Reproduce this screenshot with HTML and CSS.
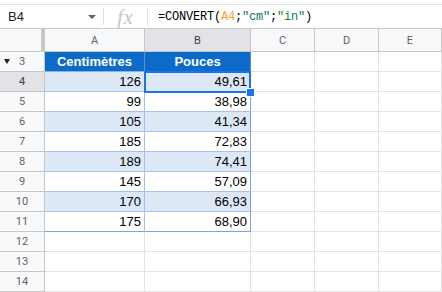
FILE: index.html
```html
<!DOCTYPE html>
<html>
<head>
    <title>CONVERT</title>
    <link rel="stylesheet" href="styles.css">
</head>
<body>
    <div class="formula-bar">
        <div class="name-box">
            <span class="cell-ref">B4</span>
            <span class="caret"></span>
        </div>
        <div class="sep"></div>
        <div class="fx">fx</div>
        <div class="sep"></div>
        <div class="formula">=CONVERT(<span class="ref">A4</span>;<span class="str">"cm"</span>;<span class="str">"in"</span>)</div>
    </div>

    <div class="sheet">
        <div class="grid top">
            <div class="corner"></div>
            <div class="col-head">A</div>
            <div class="col-head active">B</div>
            <div class="col-head">C</div>
            <div class="col-head">D</div>
            <div class="col-head">E</div>

            <div class="row-head"><span class="tri"></span>3</div>
            <div class="cell head">Centimètres</div>
            <div class="cell head">Pouces</div>
            <div class="cell"></div>
            <div class="cell"></div>
            <div class="cell"></div>
        </div>
        <div class="grid" id="rows"></div>
        <div class="selection"><span class="handle"></span></div>
    </div>

    <script>
        const data = [
            [126, '49,61'],
            [99, '38,98'],
            [105, '41,34'],
            [185, '72,83'],
            [189, '74,41'],
            [145, '57,09'],
            [170, '66,93'],
            [175, '68,90'],
        ];

        const rows = document.getElementById('rows');
        let html = '';

        for (let r = 4; r <= 14; r++) {
            const item = data[r - 4];
            html += `<div class="row-head${r === 4 ? ' active' : ''}">${r}</div>`;
            if (item) {
                const band = r % 2 === 0 ? ' band' : '';
                const last = r === 11 ? ' last' : '';
                html += `<div class="cell num${band}${last}">${item[0]}</div>`;
                html += `<div class="cell num edge${band}${last}">${item[1]}</div>`;
            } else {
                html += '<div class="cell"></div><div class="cell"></div>';
            }
            html += '<div class="cell"></div><div class="cell"></div><div class="cell"></div>';
        }

        rows.innerHTML = html;
    </script>
</body>
</html>
```

FILE: styles.css
```css
body {
    margin: 0;
    font-family: 'Liberation Sans', Arial, sans-serif;
    background: white;
    overflow: hidden;
}

.formula-bar {
    margin-top: 4px;
    height: 23px;
    border-top: 1px solid #e3e3e3;
    border-bottom: 1px solid #c7c7c7;
    display: flex;
    align-items: center;
}

.name-box {
    width: 103px;
    box-sizing: border-box;
    padding: 0 6px 0 8px;
    display: flex;
    align-items: center;
    justify-content: space-between;
    font-size: 13px;
    color: #202124;
}

.caret {
    width: 0;
    height: 0;
    border-left: 4px solid transparent;
    border-right: 4px solid transparent;
    border-top: 4px solid #5f6368;
    margin-right: 1px;
}

.sep {
    width: 1px;
    height: 17px;
    background: #e0e0e0;
}

.fx {
    width: 43px;
    text-align: center;
    font-family: 'Liberation Serif', serif;
    font-style: italic;
    font-size: 20px;
    color: #c4c7c5;
    line-height: 20px;
    letter-spacing: 1px;
}

.formula {
    padding-left: 10px;
    font-family: 'Liberation Mono', monospace;
    font-size: 12px;
    letter-spacing: -0.2px;
    color: #000;
}

.formula .ref {
    color: #f4a13f;
}

.formula .str {
    color: #0b8043;
}

.sheet {
    position: relative;
}

.grid {
    display: grid;
    grid-template-columns: 45px 100px 106px 64px 64px 1fr;
    grid-auto-rows: 20px;
}

.grid.top {
    grid-template-rows: 23px 20px;
}

.grid > div {
    box-sizing: border-box;
}

.corner {
    background: #f8f9fa;
    border-right: 4px solid #c4c7c5;
    border-bottom: 1px solid #c4c7c5;
}

.col-head {
    background: #f8f9fa;
    border-right: 1px solid #c4c7c5;
    border-bottom: 1px solid #c4c7c5;
    font-family: Roboto, sans-serif;
    font-size: 11px;
    color: #5f6368;
    display: flex;
    align-items: center;
    justify-content: center;
}

.col-head.active,
.row-head.active {
    background: #e1e3e6;
    color: #3c4043;
}

.row-head {
    position: relative;
    background: #f8f9fa;
    border-right: 1px solid #c4c7c5;
    border-bottom: 1px solid #c4c7c5;
    font-family: Roboto, sans-serif;
    font-size: 11px;
    color: #5f6368;
    display: flex;
    align-items: center;
    justify-content: center;
}

.tri {
    position: absolute;
    left: 4px;
    top: 7px;
    width: 0;
    height: 0;
    border-left: 3.5px solid transparent;
    border-right: 3.5px solid transparent;
    border-top: 5px solid #202124;
}

.cell {
    border-right: 1px solid #e2e3e3;
    border-bottom: 1px solid #e2e3e3;
    font-size: 13px;
    color: #000;
    display: flex;
    align-items: center;
    padding: 0 3px;
    white-space: nowrap;
}

.cell.head {
    background: #0c6bc8;
    color: white;
    font-weight: bold;
    justify-content: center;
    border-right-color: #5b8fd6;
    border-bottom-color: #8fb1e6;
}

.cell.num {
    justify-content: flex-end;
    border-right-color: #a8c1eb;
    border-bottom-color: #a8c1eb;
}

.cell.num.edge {
    border-right-color: #7ea3e3;
}

.cell.num.last {
    border-bottom-color: #7ea3e3;
}

.cell.band {
    background: #dde8f6;
}

.selection {
    position: absolute;
    left: 144px;
    top: 42px;
    width: 107px;
    height: 22px;
    box-sizing: border-box;
    border: 2px solid #1a73e8;
}

.handle {
    position: absolute;
    right: -5px;
    bottom: -5px;
    width: 7px;
    height: 7px;
    background: #1a73e8;
    box-shadow: 0 0 0 1px white;
}
```
